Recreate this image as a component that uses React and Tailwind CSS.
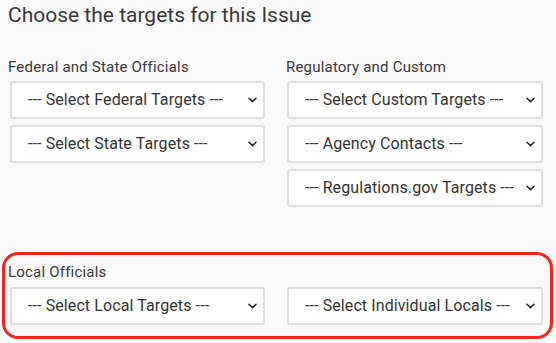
import React from "react";

function Chevron() {
  return (
    <svg
      className="pointer-events-none absolute right-[8px] top-1/2 -translate-y-1/2"
      width="9"
      height="6"
      viewBox="0 0 9 6"
      fill="none"
    >
      <path d="M1 1.2 L4.5 4.6 L8 1.2" stroke="#222" strokeWidth="1.5" strokeLinecap="round" strokeLinejoin="round" />
    </svg>
  );
}

function Select({ label, className = "" }) {
  return (
    <div className={"relative h-[38px] w-[255px] " + className}>
      <select
        className="h-full w-full appearance-none rounded-[3px] border-2 border-[#dedede] bg-white pl-[16px] pr-6 text-[16px] tracking-[0.1px] text-[#333] outline-none"
        style={{ fontFamily: "Roboto, 'Liberation Sans', sans-serif" }}
        defaultValue=""
      >
        <option value="">{label}</option>
      </select>
      <Chevron />
    </div>
  );
}

export default function App() {
  return (
    <div
      className="h-[343px] w-[556px] overflow-hidden bg-[#f9f9f9] text-[#333]"
      style={{ fontFamily: "Roboto, 'Liberation Sans', sans-serif" }}
    >
      <h2 className="pl-2 pt-[3px] text-[21px] leading-[25px] font-normal text-[#383838]">
        Choose the targets for this Issue
      </h2>

      <div className="mt-[29px] flex pl-2">
        <div className="w-[259px]">
          <div className="text-[15px] leading-[20px] tracking-[0.2px] text-[#3a3a3a]">Federal and State Officials</div>
          <div className="mt-[4px] flex flex-col gap-[6px]">
            <Select label="--- Select Federal Targets ---" className="ml-[2px]" />
            <Select label="--- Select State Targets ---" className="ml-[2px]" />
          </div>
        </div>
        <div className="ml-[19px] w-[260px]">
          <div className="text-[15px] leading-[20px] tracking-[0.2px] text-[#3a3a3a]">Regulatory and Custom</div>
          <div className="mt-[4px] flex flex-col gap-[6px]">
            <Select label="--- Select Custom Targets ---" className="ml-[1px] w-[256px]" />
            <Select label="--- Agency Contacts ---" className="ml-[1px] w-[256px]" />
            <Select label="--- Regulations.gov Targets ---" className="ml-[1px] w-[256px]" />
          </div>
        </div>
      </div>

      <div className="mx-[2px] mt-[45px] w-[551px] rounded-[16px] border-[3px] border-[#f4241a] pb-[11px] pl-[3px] pt-[7px]">
        <div className="text-[15px] leading-[20px] tracking-[0.2px] text-[#3a3a3a]">Local Officials</div>
        <div className="mt-[5px] flex">
          <div className="w-[259px]">
            <Select label="--- Select Local Targets ---" className="ml-[2px]" />
          </div>
          <div className="ml-[19px] w-[260px]">
            <Select label="--- Select Individual Locals ---" className="ml-[1px] w-[256px]" />
          </div>
        </div>
      </div>
    </div>
  );
}
